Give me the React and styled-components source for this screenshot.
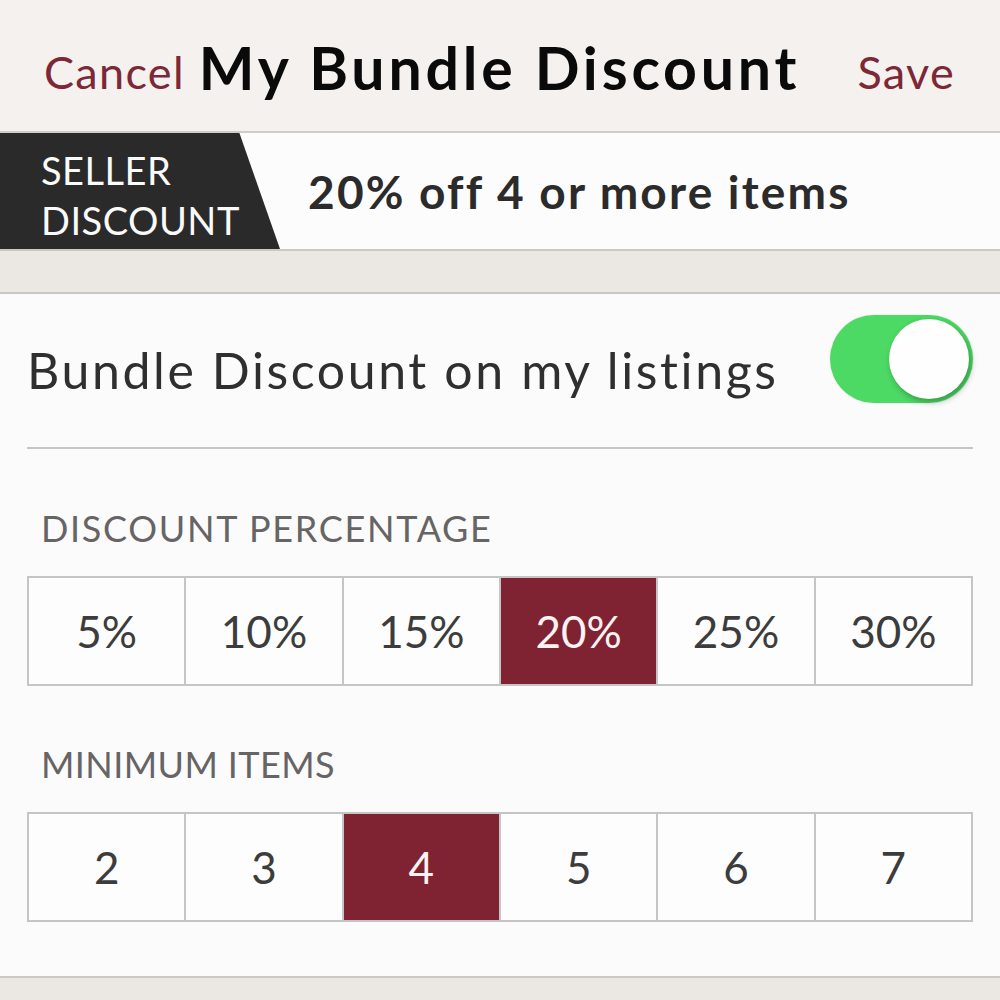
import React, { useState } from "react";
import styled, { createGlobalStyle } from "styled-components";

const Global = createGlobalStyle`
  html, body { margin: 0; padding: 0; }
  body {
    width: 1000px;
    height: 1000px;
    overflow: hidden;
    background: #ebe8e4;
    font-family: Lato, "Open Sans", "Liberation Sans", sans-serif;
    -webkit-font-smoothing: antialiased;
  }
`;

const Screen = styled.div`
  display: flex;
  flex-direction: column;
  width: 1000px;
  height: 1000px;
`;

const NavBar = styled.header`
  display: grid;
  grid-template-columns: 1fr auto 1fr;
  align-items: center;
  height: 131px;
  padding: 0 45px 0 44px;
  background: #f4f1ee;
  border-bottom: 2px solid #cfccc9;
  box-sizing: content-box;
`;

const NavButton = styled.button`
  justify-self: ${(p) => (p.$right ? "end" : "start")};
  border: 0;
  padding: 0;
  margin-top: 12px;
  background: none;
  font-family: inherit;
  font-size: 45px;
  letter-spacing: 1.3px;
  color: #7c2837;
`;

const Title = styled.h1`
  margin: 4px 0 0;
  font-size: 59px;
  font-weight: 700;
  color: #0a0a0a;
  letter-spacing: 3.8px;
`;

const Banner = styled.div`
  display: flex;
  align-items: center;
  height: 116px;
  background: #fdfcfc;
  border-bottom: 2px solid #cbc8c6;
`;

const Badge = styled.div`
  display: flex;
  flex-direction: column;
  justify-content: center;
  align-self: stretch;
  width: 280px;
  padding: 8px 0 0 41px;
  box-sizing: border-box;
  background: #2a2a2a;
  clip-path: polygon(0 0, 85.5% 0, 100% 100%, 0 100%);
  color: #fafafa;
  font-size: 38px;
  line-height: 50px;
  letter-spacing: 0.5px;
`;

const BannerText = styled.div`
  margin-left: 28px;
  font-size: 46px;
  font-weight: 700;
  letter-spacing: 2.2px;
  color: #2b2b2b;
`;

const Band = styled.div`
  height: 41px;
  background: #ebe8e4;
  border-bottom: 2px solid #c9c6c3;
`;

const Card = styled.section`
  display: flex;
  flex-direction: column;
  height: 682px;
  padding: 0 27px;
  background: #fcfbfb;
  border-bottom: 2px solid #cbc8c5;
`;

const ToggleRow = styled.div`
  display: flex;
  align-items: center;
  justify-content: space-between;
  height: 153px;
  border-bottom: 2px solid #c6c6c6;
`;

const ToggleLabel = styled.span`
  margin-top: -2px;
  font-size: 50px;
  letter-spacing: 2.6px;
  color: #2f2f2f;
`;

const Switch = styled.button`
  position: relative;
  width: 143px;
  height: 88px;
  margin-top: -24px;
  border: 0;
  padding: 0;
  border-radius: 44px;
  background: ${(p) => (p.$on ? "#4cd964" : "#e3e3e3")};
  box-shadow: 0 0 0 1px rgba(0, 0, 0, 0.04);
  cursor: pointer;
`;

const Knob = styled.span`
  position: absolute;
  top: 4px;
  left: ${(p) => (p.$on ? "59px" : "4px")};
  width: 80px;
  height: 80px;
  border-radius: 50%;
  background: #fefefe;
  box-shadow: 2px 3px 6px rgba(0, 0, 0, 0.3);
`;

const SectionLabel = styled.div`
  margin: ${(p) => p.$top}px 0 0 14px;
  font-size: 36px;
  letter-spacing: ${(p) => p.$spacing}px;
  color: #666464;
  line-height: 44px;
`;

const Segments = styled.div`
  display: grid;
  grid-template-columns: repeat(6, 1fr);
  gap: 2px;
  margin-top: 26px;
  padding: 2px;
  height: 106px;
  background: #c6c5c5;
`;

const Segment = styled.button`
  border: 0;
  padding: 0;
  font-family: inherit;
  font-size: 44px;
  color: ${(p) => (p.$active ? "#fbf2f3" : "#3c3c3c")};
  background: ${(p) => (p.$active ? "#7f2232" : "#fdfdfd")};
  cursor: pointer;
`;

const percents = [5, 10, 15, 20, 25, 30];
const counts = [2, 3, 4, 5, 6, 7];

export default function App() {
  const [on, setOn] = useState(true);
  const [pct, setPct] = useState(20);
  const [min, setMin] = useState(4);

  return (
    <Screen>
      <Global />
      <NavBar>
        <NavButton>Cancel</NavButton>
        <Title>My Bundle Discount</Title>
        <NavButton $right>Save</NavButton>
      </NavBar>
      <Banner>
        <Badge>
          <span>SELLER</span>
          <span>DISCOUNT</span>
        </Badge>
        <BannerText>
          {pct}% off {min} or more items
        </BannerText>
      </Banner>
      <Band />
      <Card>
        <ToggleRow>
          <ToggleLabel>Bundle Discount on my listings</ToggleLabel>
          <Switch $on={on} onClick={() => setOn(!on)} aria-label="Bundle Discount">
            <Knob $on={on} />
          </Switch>
        </ToggleRow>
        <SectionLabel $top={57} $spacing={1.7}>DISCOUNT PERCENTAGE</SectionLabel>
        <Segments>
          {percents.map((v) => (
            <Segment key={v} $active={v === pct} onClick={() => setPct(v)}>
              {v}%
            </Segment>
          ))}
        </Segments>
        <SectionLabel $top={56} $spacing={0.4}>MINIMUM ITEMS</SectionLabel>
        <Segments>
          {counts.map((v) => (
            <Segment key={v} $active={v === min} onClick={() => setMin(v)}>
              {v}
            </Segment>
          ))}
        </Segments>
      </Card>
    </Screen>
  );
}
